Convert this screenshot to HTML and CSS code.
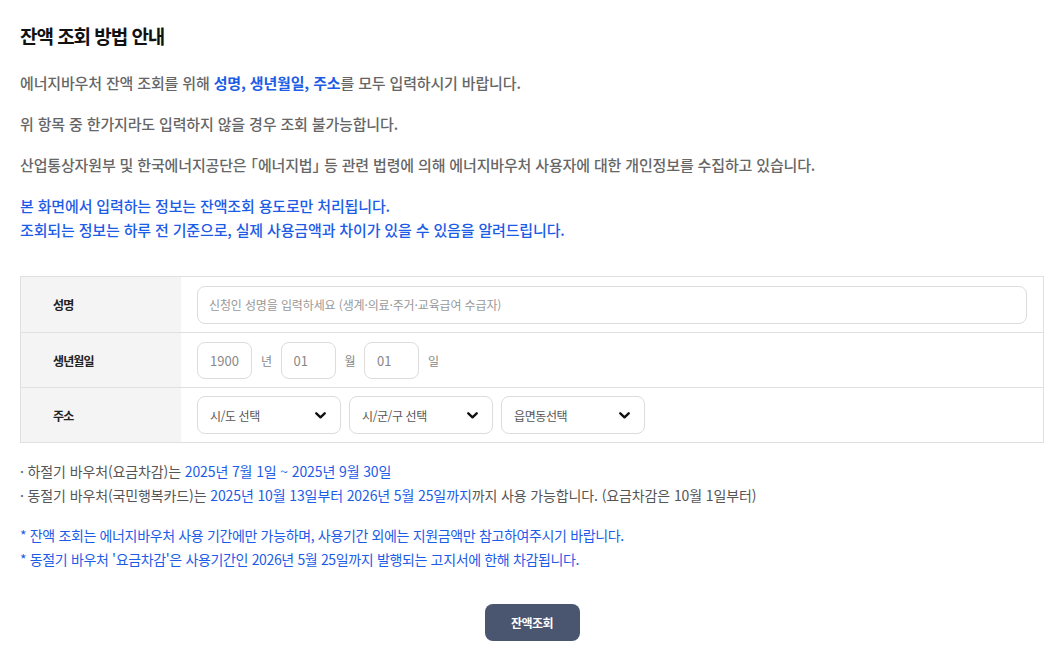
FILE: index.html
```html
<!DOCTYPE html>
<html lang="ko">
<head>
    <meta charset="UTF-8">
    <meta name="viewport" content="width=device-width, initial-scale=1.0">
    <title>잔액 조회</title>
    <link rel="stylesheet" href="styles.css">
</head>
<body>
    <div class="page">
        <!-- 안내 문구 -->
        <section class="guide">
            <h2 class="guide-title">잔액 조회 방법 안내</h2>
            <p class="guide-text">에너지바우처 잔액 조회를 위해 <strong class="hl">성명, 생년월일, 주소</strong>를 모두 입력하시기 바랍니다.</p>
            <p class="guide-text">위 항목 중 한가지라도 입력하지 않을 경우 조회 불가능합니다.</p>
            <p class="guide-text">산업통상자원부 및 한국에너지공단은 <span class="bracket">「</span>에너지법<span class="bracket">」</span> 등 관련 법령에 의해 에너지바우처 사용자에 대한 개인정보를 수집하고 있습니다.</p>
            <p class="guide-text blue">본 화면에서 입력하는 정보는 잔액조회 용도로만 처리됩니다.<br>조회되는 정보는 하루 전 기준으로, 실제 사용금액과 차이가 있을 수 있음을 알려드립니다.</p>
        </section>

        <!-- 입력 폼 -->
        <div class="form-table">
            <div class="form-row">
                <div class="form-label">성명</div>
                <div class="form-field">
                    <input type="text" class="input-name" placeholder="신청인 성명을 입력하세요 (생계·의료·주거·교육급여 수급자)">
                </div>
            </div>
            <div class="form-row">
                <div class="form-label">생년월일</div>
                <div class="form-field">
                    <input type="text" class="input-date" placeholder="1900">
                    <span class="unit">년</span>
                    <input type="text" class="input-date" placeholder="01">
                    <span class="unit">월</span>
                    <input type="text" class="input-date" placeholder="01">
                    <span class="unit">일</span>
                </div>
            </div>
            <div class="form-row">
                <div class="form-label">주소</div>
                <div class="form-field">
                    <div class="select-box">
                        <select><option>시/도 선택</option></select>
                        <svg class="chevron" width="11" height="7" viewBox="0 0 11 7"><polyline points="1.3,1.3 5.5,5.3 9.7,1.3" fill="none" stroke="#111" stroke-width="2.4" stroke-linecap="round" stroke-linejoin="round"/></svg>
                    </div>
                    <div class="select-box">
                        <select><option>시/군/구 선택</option></select>
                        <svg class="chevron" width="11" height="7" viewBox="0 0 11 7"><polyline points="1.3,1.3 5.5,5.3 9.7,1.3" fill="none" stroke="#111" stroke-width="2.4" stroke-linecap="round" stroke-linejoin="round"/></svg>
                    </div>
                    <div class="select-box">
                        <select><option>읍면동선택</option></select>
                        <svg class="chevron" width="11" height="7" viewBox="0 0 11 7"><polyline points="1.3,1.3 5.5,5.3 9.7,1.3" fill="none" stroke="#111" stroke-width="2.4" stroke-linecap="round" stroke-linejoin="round"/></svg>
                    </div>
                </div>
            </div>
        </div>

        <!-- 사용 기간 -->
        <ul class="period-list">
            <li>· 하절기 바우처(요금차감)는 <span class="blue">2025년 7월 1일 ~ 2025년 9월 30일</span></li>
            <li>· 동절기 바우처(국민행복카드)는 <span class="blue">2025년 10월 13일부터 2026년 5월 25일까지</span>까지 사용 가능합니다. (요금차감은 10월 1일부터)</li>
        </ul>

        <ul class="notice-list">
            <li>* 잔액 조회는 에너지바우처 사용 기간에만 가능하며, 사용기간 외에는 지원금액만 참고하여주시기 바랍니다.</li>
            <li>* 동절기 바우처 '요금차감'은 사용기간인 2026년 5월 25일까지 발행되는 고지서에 한해 차감됩니다.</li>
        </ul>

        <div class="btn-wrap">
            <button type="button" class="btn-search">잔액조회</button>
        </div>
    </div>
</body>
</html>
```

FILE: styles.css
```css
* {
    margin: 0;
    padding: 0;
    box-sizing: border-box;
}

body {
    font-family: "Noto Sans CJK KR", "Noto Sans", sans-serif;
    background-color: #fff;
    color: #222;
}

.page {
    padding: 22px 20px 0;
}

.blue {
    color: #1d5ce6;
}

/* 안내 문구 */
.guide-title {
    font-size: 19px;
    font-weight: 700;
    line-height: 28px;
    letter-spacing: -1.05px;
    color: #111;
    margin-bottom: 21px;
}

.guide-text {
    font-size: 15px;
    font-weight: 500;
    line-height: 24px;
    letter-spacing: -0.15px;
    color: #666;
    margin-bottom: 17px;
}

.guide-text .bracket {
    font-feature-settings: "halt";
}

.guide-text.blue {
    color: #1d5ce6;
    margin-bottom: 0;
}

.guide-text .hl {
    color: #1d5ce6;
    font-weight: 700;
}

/* 입력 폼 */
.form-table {
    margin-top: 34px;
    border: 1px solid #e0e0e0;
}

.form-row {
    display: flex;
    height: 55px;
    border-top: 1px solid #e0e0e0;
}

.form-row:first-child {
    border-top: none;
}

.form-label {
    width: 160px;
    flex-shrink: 0;
    display: flex;
    align-items: center;
    padding-left: 32px;
    background-color: #f4f4f4;
    font-size: 12px;
    font-weight: 700;
    letter-spacing: -0.9px;
    color: #222;
}

.form-field {
    flex: 1;
    display: flex;
    align-items: center;
    padding: 0 16px;
}

.form-field input,
.form-field select {
    font-family: "Noto Sans CJK KR", "Noto Sans", sans-serif;
    border: 1px solid #dcdcdc;
    border-radius: 8px;
    background-color: #fff;
    outline: none;
}

.input-name {
    width: 100%;
    height: 38px;
    padding: 0 11px;
    font-size: 12px;
    letter-spacing: -0.13px;
}

.input-name::placeholder {
    color: #999;
}

.input-date {
    width: 55px;
    height: 37px;
    padding: 0 12px;
    font-size: 13px;
}

.input-date::placeholder {
    color: #888;
}

.unit {
    font-size: 12px;
    color: #888;
    margin: 0 9px;
    letter-spacing: -0.5px;
}

.select-box {
    position: relative;
    width: 144px;
    margin-right: 8px;
}

.select-box select {
    width: 100%;
    height: 38px;
    padding: 0 12px;
    font-size: 12px;
    letter-spacing: -0.4px;
    color: #555;
    appearance: none;
    -webkit-appearance: none;
}

.select-box .chevron {
    position: absolute;
    right: 15px;
    top: 16px;
    pointer-events: none;
}

/* 사용 기간 / 유의사항 */
.period-list,
.notice-list {
    list-style: none;
    font-size: 14px;
    line-height: 24px;
}

.period-list {
    margin-top: 16px;
    color: #555;
    letter-spacing: -0.12px;
}

.notice-list {
    margin-top: 16px;
    color: #1d5ce6;
    letter-spacing: -0.35px;
}

.btn-wrap {
    text-align: center;
    margin-top: 33px;
}

.btn-search {
    width: 95px;
    height: 37px;
    border: none;
    border-radius: 8px;
    background-color: #4a5570;
    color: #fff;
    font-family: "Noto Sans CJK KR", "Noto Sans", sans-serif;
    font-size: 12px;
    font-weight: 700;
    letter-spacing: -0.5px;
    cursor: pointer;
}
```
